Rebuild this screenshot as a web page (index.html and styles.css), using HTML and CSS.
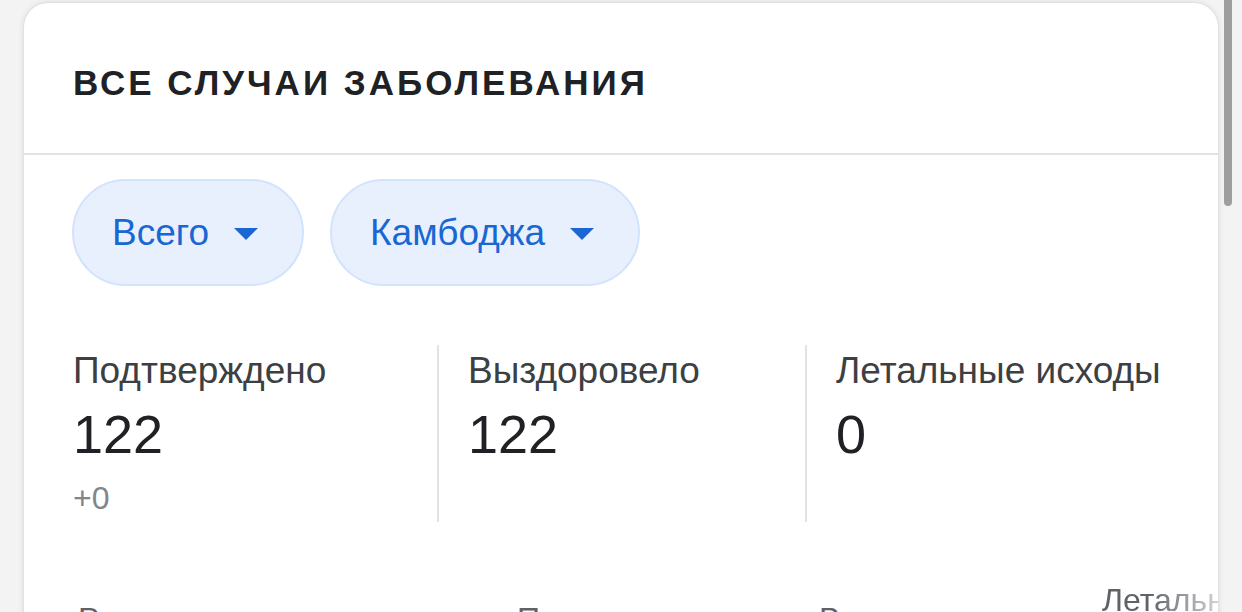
FILE: index.html
```html
<!DOCTYPE html>
<html>
	<head>
		<title>Все случаи заболевания</title>
		<link rel="stylesheet" href="styles.css">
	</head>
	<body>
		<div class="card">
			<div class="card-head">
				<h2 class="title">ВСЕ СЛУЧАИ ЗАБОЛЕВАНИЯ</h2>
			</div>
			<div class="card-body">
				<div class="chips">
					<div class="chip">Всего <span class="arrow"></span></div>
					<div class="chip">Камбоджа <span class="arrow"></span></div>
				</div>
				<div class="stats">
					<div class="stat">
						<div class="stat-label">Подтверждено</div>
						<div class="stat-value">122</div>
						<div class="stat-delta">+0</div>
					</div>
					<div class="stat">
						<div class="stat-label">Выздоровело</div>
						<div class="stat-value">122</div>
					</div>
					<div class="stat">
						<div class="stat-label">Летальные исходы</div>
						<div class="stat-value">0</div>
					</div>
				</div>
				<div class="table-head">
					<div class="th th-place">Регион</div>
					<div class="th th-conf">Подтверждено</div>
					<div class="th th-rec">Выздоровело</div>
					<div class="th th-dead">Летальные исходы</div>
				</div>
			</div>
		</div>
		<div class="scrollbar"></div>
	</body>
</html>
```

FILE: styles.css
```css
html, body{
	margin: 0;
	padding: 0;
	height: 612px;
	overflow: hidden;
}
body{
	background: #f3f3f3;
	font-family: "Liberation Sans", Arial, sans-serif;
	color: #202124;
}
.card{
	margin: 3px 24px 0 24px;
	height: 640px;
	background: #fff;
	border-radius: 24px 24px 0 0;
	box-shadow: 0 0 6px rgba(0,0,0,0.12), 0 0 2px rgba(0,0,0,0.08);
	overflow: hidden;
}
.card-head{
	height: 150px;
	border-bottom: 2px solid #e3e3e3;
	display: flex;
	align-items: center;
	padding: 0 49px;
}
.title{
	margin: 0;
	font-size: 35px;
	font-weight: bold;
	letter-spacing: 3px;
	padding-top: 10px;
}
.card-body{
	padding: 0 0 0 48px;
}
.chips{
	display: flex;
	gap: 26px;
	padding-top: 24px;
}
.chip{
	height: 107px;
	box-sizing: border-box;
	border: 2px solid #d2e3fc;
	background: #e8f0fe;
	border-radius: 54px;
	display: flex;
	align-items: center;
	padding: 0 44px 0 38px;
	font-size: 37px;
	color: #1967d2;
}
.arrow{
	width: 0;
	height: 0;
	margin-left: 25px;
	border-left: 12px solid transparent;
	border-right: 12px solid transparent;
	border-top: 12px solid #1967d2;
	margin-top: 2px;
}
.stats{
	display: grid;
	grid-template-columns: 365px 368px 1fr;
	margin-top: 59px;
}
.stat{
	height: 177px;
	padding-left: 29px;
	border-left: 2px solid #e3e3e3;
}
.stat:first-child{
	padding-left: 1px;
	border-left: none;
}
.stat-label{
	font-size: 37px;
	color: #3c4043;
	line-height: 42px;
	margin-top: 5px;
}
.stat-value{
	font-size: 54px;
	line-height: 60px;
	margin-top: 12px;
}
.stat-delta{
	font-size: 32px;
	color: #80868b;
	line-height: 40px;
	margin-top: 14px;
}
.table-head{
	display: flex;
	align-items: flex-end;
	height: 100px;
	font-size: 32px;
	color: #5f6368;
}
.th{
	flex: none;
	line-height: 38px;
	margin-bottom: -16px;
}
.th-place{
	width: 439px;
	padding-left: 6px;
}
.th-conf{
	width: 302px;
}
.th-rec{
	width: 283px;
}
.th-dead{
	width: 120px;
	overflow: hidden;
	white-space: nowrap;
	margin-bottom: 3px;
	-webkit-mask-image: linear-gradient(to right, #000 40%, rgba(0,0,0,0.25));
	mask-image: linear-gradient(to right, #000 40%, rgba(0,0,0,0.25));
}
.scrollbar{
	position: absolute;
	top: 0;
	left: 1224px;
	width: 8px;
	height: 206px;
	background: #9e9e9e;
	border-radius: 0 0 4px 4px;
}
```
